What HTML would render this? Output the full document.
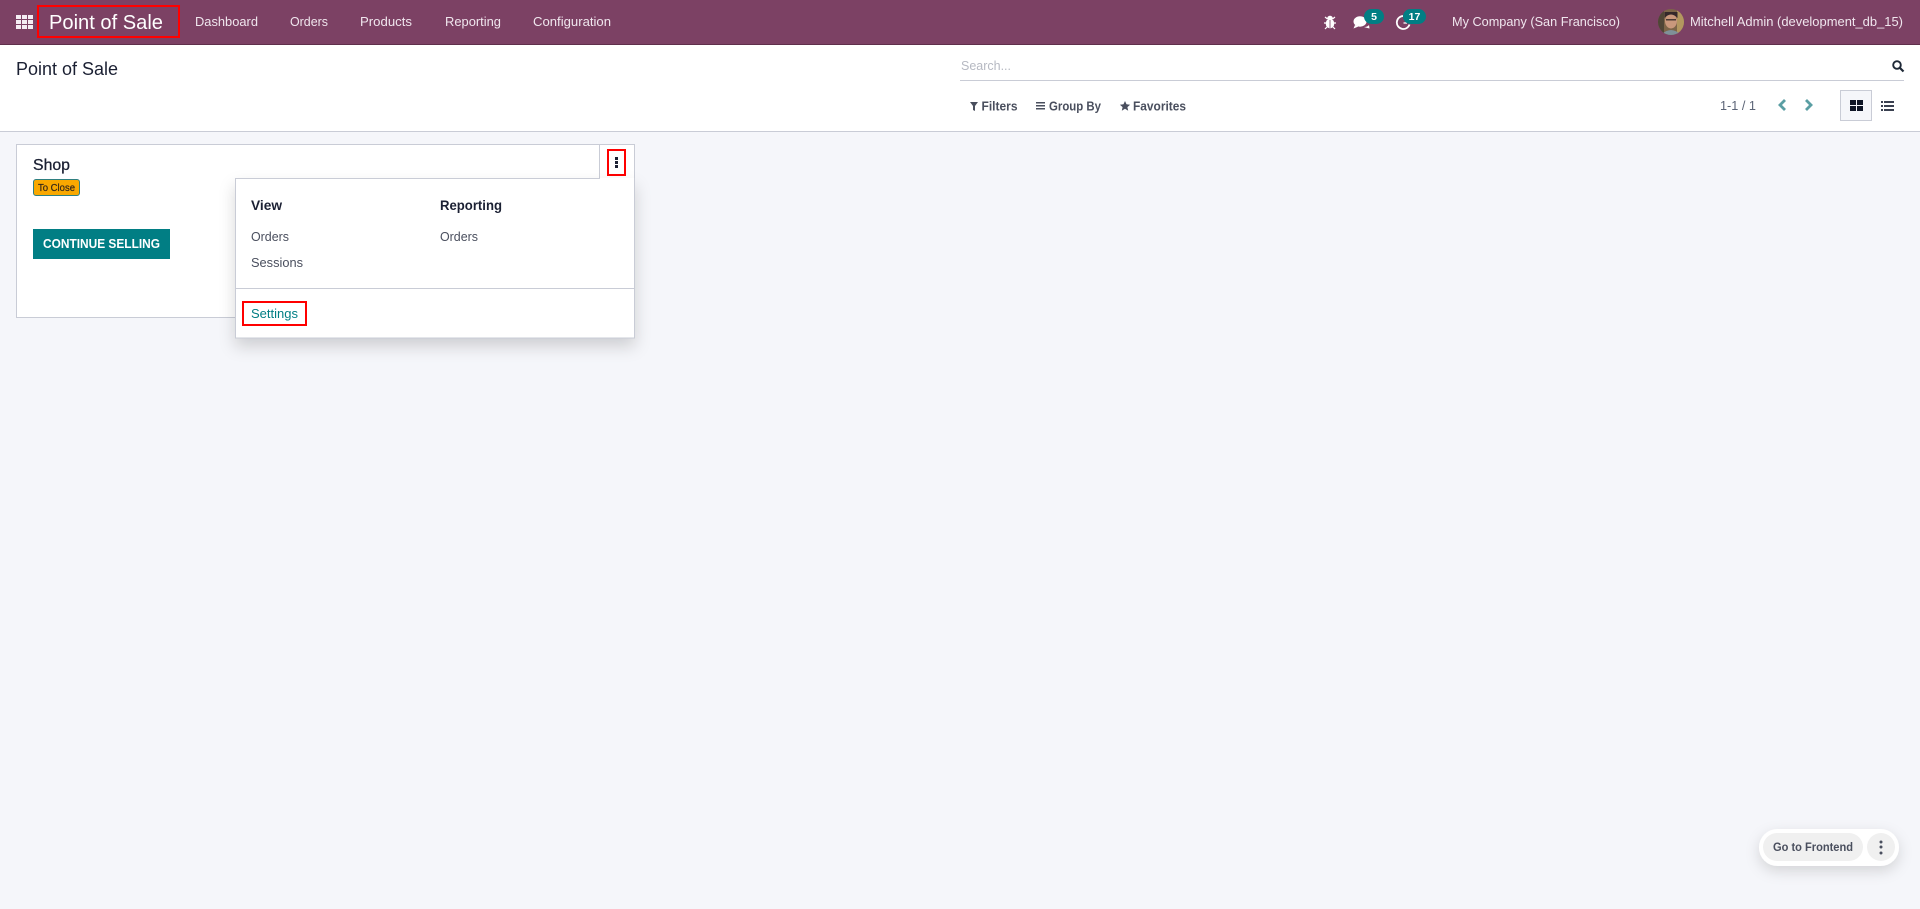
<!DOCTYPE html>
<html lang="en"><head><meta charset="utf-8"><title>Point of Sale</title>
<style>
html,body{margin:0;padding:0;width:1920px;height:909px;overflow:hidden;background:#f5f6fa}
svg{display:block}
text{font-family:"Liberation Sans",sans-serif;font-size:13px;fill:#4a4f5e}
.n{fill:#f0e6ee}
.b{font-weight:bold}
</style></head><body>
<svg width="1920" height="909" viewBox="0 0 1920 909" xmlns="http://www.w3.org/2000/svg">
<defs>
<filter id="s" filterUnits="userSpaceOnUse" x="180" y="150" width="520" height="240"><feDropShadow dx="0" dy="8" stdDeviation="8" flood-color="#000" flood-opacity=".16"/></filter>
<filter id="s2" filterUnits="userSpaceOnUse" x="1720" y="800" width="200" height="109"><feDropShadow dx="0" dy="5" stdDeviation="7" flood-color="#000" flood-opacity=".14"/></filter>
<clipPath id="av"><circle cx="1671" cy="22" r="13"/></clipPath>
</defs>
<rect width="1920" height="909" fill="#f5f6fa"/>
<!-- navbar -->
<rect width="1920" height="45" fill="#7c4164"/>
<rect y="44" width="1920" height="1" fill="#5f2f4b"/>
<g fill="#f5edf3">
<rect x="16" y="15" width="5" height="4"/><rect x="22" y="15" width="5" height="4"/><rect x="28" y="15" width="5" height="4"/>
<rect x="16" y="20" width="5" height="4"/><rect x="22" y="20" width="5" height="4"/><rect x="28" y="20" width="5" height="4"/>
<rect x="16" y="25" width="5" height="4"/><rect x="22" y="25" width="5" height="4"/><rect x="28" y="25" width="5" height="4"/>
</g>
<rect x="38" y="6" width="141" height="31" fill="none" stroke="#f00" stroke-width="2"/>
<text x="49" y="29" class="n" style="font-size:20px;fill:#fff" textLength="114" lengthAdjust="spacingAndGlyphs">Point of Sale</text>
<text x="195" y="26" class="n" textLength="63" lengthAdjust="spacingAndGlyphs">Dashboard</text>
<text x="290" y="26" class="n" textLength="38" lengthAdjust="spacingAndGlyphs">Orders</text>
<text x="360" y="26" class="n" textLength="52" lengthAdjust="spacingAndGlyphs">Products</text>
<text x="445" y="26" class="n" textLength="56" lengthAdjust="spacingAndGlyphs">Reporting</text>
<text x="533" y="26" class="n" textLength="78" lengthAdjust="spacingAndGlyphs">Configuration</text>
<!-- bug -->
<g fill="#fff" stroke="none">
<ellipse cx="1330" cy="23.5" rx="4.300" ry="4.800"/><ellipse cx="1330" cy="18" rx="2.800" ry="2.200"/>
<path d="M1325 17l2.500 2M1335 17l-2.500 2M1324 23h3M1336 23h-3M1325 29l2.500-2.500M1335 29l-2.500-2.500" stroke="#fff" stroke-width="1.200" fill="none"/>
<rect x="1329.600" y="20" width=".8" height="8" fill="#7c4164"/>
</g>
<!-- chat -->
<ellipse cx="1360" cy="21.500" rx="6.500" ry="5.200" fill="#fff"/>
<path d="M1355 25l-1.500 3.500 5-2z" fill="#fff"/>
<path d="M1364 27c2.500 0 4-.8 5-2l.5 3.500-3-.8z" fill="#fff"/>
<rect x="1364" y="9" width="20" height="15" rx="7.500" fill="#017e84"/>
<text x="1374" y="20" text-anchor="middle" style="font-size:10.500px;fill:#fff" class="b">5</text>
<!-- activity -->
<path d="M1403 16a6.500 6.500 0 1 0 6.500 8.500" fill="none" stroke="#fff" stroke-width="1.800"/>
<path d="M1403.500 23h3.500" fill="none" stroke="#fff" stroke-width="1.300"/>
<rect x="1403" y="9" width="23" height="15" rx="7.500" fill="#017e84"/>
<text x="1414.500" y="20" text-anchor="middle" style="font-size:10.500px;fill:#fff" class="b">17</text>
<text x="1452" y="26" class="n" textLength="168" lengthAdjust="spacingAndGlyphs">My Company (San Francisco)</text>
<!-- avatar -->
<g clip-path="url(#av)">
<rect x="1658" y="9" width="26" height="26" fill="#7d6548"/>
<rect x="1677" y="9" width="7" height="26" fill="#b3975f"/>
<rect x="1658" y="9" width="6" height="26" fill="#4f4636"/>
<ellipse cx="1671" cy="21" rx="6" ry="7.500" fill="#c9987c"/>
<path d="M1664.500 18q6.500-7 13 0l0-6h-13z" fill="#33282a"/>
<rect x="1666" y="19" width="10" height="1.500" fill="#4a3a34"/>
<path d="M1660 36q11-12 22 0z" fill="#7f9099"/>
</g>
<text x="1690" y="26" class="n" textLength="213" lengthAdjust="spacingAndGlyphs">Mitchell Admin (development_db_15)</text>
<!-- control panel -->
<rect y="45" width="1920" height="86" fill="#fff"/>
<rect y="131" width="1920" height="1" fill="#c9ccd6"/>
<text x="16" y="75" style="font-size:18px;fill:#1b2033" textLength="102" lengthAdjust="spacingAndGlyphs">Point of Sale</text>
<text x="961" y="70" style="fill:#b6b9c2" textLength="50" lengthAdjust="spacingAndGlyphs">Search...</text>
<rect x="960" y="80" width="944" height="1" fill="#c9ccd6"/>
<circle cx="1897" cy="65" r="3.800" fill="none" stroke="#1f2937" stroke-width="1.900"/>
<path d="M1900 68l3.500 3.500" stroke="#1f2937" stroke-width="2.200" fill="none"/>
<path d="M970 102h8l-3 4v5l-2-1v-4z" fill="#4a4f5e"/>
<text x="981.500" y="110.500" class="b" textLength="36" lengthAdjust="spacingAndGlyphs">Filters</text>
<g fill="#4a4f5e"><rect x="1036" y="102" width="9" height="1.500"/><rect x="1036" y="105" width="9" height="1.500"/><rect x="1036" y="108" width="9" height="1.500"/></g>
<text x="1049" y="110.500" class="b" textLength="52" lengthAdjust="spacingAndGlyphs">Group By</text>
<path d="M1125 101l1.500 3.300 3.600.4-2.700 2.400.8 3.600-3.200-1.900-3.200 1.900.8-3.600-2.700-2.400 3.600-.4z" fill="#4a4f5e"/>
<text x="1133" y="110.500" class="b" textLength="53" lengthAdjust="spacingAndGlyphs">Favorites</text>
<text x="1720" y="110" style="fill:#5b6476" textLength="36" lengthAdjust="spacingAndGlyphs">1-1 / 1</text>
<path d="M1785 100l-5 5 5 5" fill="none" stroke="#5a9ea3" stroke-width="2.800"/>
<path d="M1806 100l5 5-5 5" fill="none" stroke="#5a9ea3" stroke-width="2.800"/>
<rect x="1840.500" y="90.500" width="31" height="30" fill="#f5f6fa" stroke="#c9ccd6"/>
<g fill="#0f1526"><rect x="1850" y="100" width="6" height="5"/><rect x="1857" y="100" width="6" height="5"/><rect x="1850" y="106" width="6" height="5"/><rect x="1857" y="106" width="6" height="5"/></g>
<g fill="#3a4050"><rect x="1881" y="101" width="2" height="2"/><rect x="1884" y="101" width="10" height="2"/><rect x="1881" y="105" width="2" height="2"/><rect x="1884" y="105" width="10" height="2"/><rect x="1881" y="109" width="2" height="2"/><rect x="1884" y="109" width="10" height="2"/></g>
<!-- card -->
<rect x="16.500" y="144.500" width="618" height="173" fill="#fff" stroke="#c9ccd6"/>
<rect x="599" y="145" width="1" height="33" fill="#c9ccd6"/>
<text x="33" y="170" style="font-size:16px;fill:#1b2033;stroke:#1b2033;stroke-width:.3px" textLength="37" lengthAdjust="spacingAndGlyphs">Shop</text>
<rect x="33.500" y="179.500" width="46" height="16" rx="2.500" fill="#f9a800" stroke="#2f7f80"/>
<text x="38" y="191" style="font-size:10px;fill:#33261a;stroke:#33261a;stroke-width:.2px" textLength="37" lengthAdjust="spacingAndGlyphs">To Close</text>
<rect x="33" y="229" width="137" height="30" fill="#017e84"/>
<text x="43" y="248" class="b" style="font-size:13px;fill:#fff" textLength="117" lengthAdjust="spacingAndGlyphs">CONTINUE SELLING</text>
<rect x="608" y="150" width="17" height="25" fill="none" stroke="#f00" stroke-width="2"/>
<g fill="#1b2033"><rect x="615" y="157" width="3" height="3"/><rect x="615" y="161" width="3" height="3"/><rect x="615" y="165" width="3" height="3"/></g>
<!-- dropdown -->
<rect x="235.500" y="178.500" width="399" height="159.500" fill="#fff" stroke="#c9ccd6" filter="url(#s)"/>
<rect x="600" y="178" width="34" height="2" fill="#fff"/>
<rect x="236" y="288" width="398" height="1" fill="#c9ccd6"/>
<text x="251" y="210" class="b" style="font-size:14px;fill:#1b2033" textLength="31" lengthAdjust="spacingAndGlyphs">View</text>
<text x="440" y="210" class="b" style="font-size:14px;fill:#1b2033" textLength="62" lengthAdjust="spacingAndGlyphs">Reporting</text>
<text x="251" y="241" textLength="38" lengthAdjust="spacingAndGlyphs">Orders</text>
<text x="440" y="241" textLength="38" lengthAdjust="spacingAndGlyphs">Orders</text>
<text x="251" y="267" textLength="52" lengthAdjust="spacingAndGlyphs">Sessions</text>
<text x="251" y="318" style="fill:#017e84" textLength="47" lengthAdjust="spacingAndGlyphs">Settings</text>
<rect x="243" y="302" width="63" height="23" fill="none" stroke="#f00" stroke-width="2"/>
<!-- floating -->
<rect x="1759" y="829" width="140" height="37" rx="18.500" fill="#fff" filter="url(#s2)"/>
<rect x="1763" y="833" width="100" height="28" rx="14" fill="#f0f0f0"/>
<circle cx="1881" cy="847" r="14" fill="#f0f0f0"/>
<text x="1773" y="851" class="b" style="font-size:12px" textLength="80" lengthAdjust="spacingAndGlyphs">Go to Frontend</text>
<g fill="#4a4f5e"><circle cx="1881" cy="842" r="1.500"/><circle cx="1881" cy="847" r="1.500"/><circle cx="1881" cy="853" r="1.500"/></g>
</svg>
</body></html>
